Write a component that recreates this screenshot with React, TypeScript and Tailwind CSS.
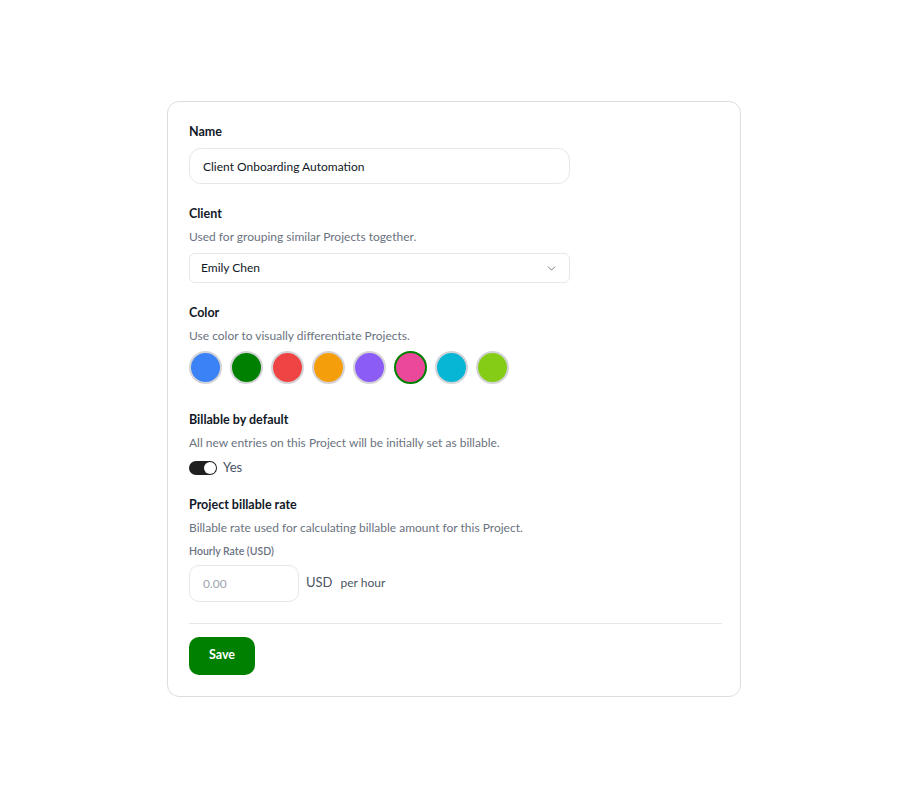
import { useState } from 'react';

const colors = ['#3b82f6', '#008000', '#ef4444', '#f59e0b', '#8b5cf6', '#ec4899', '#06b6d4', '#84cc16'];

export default function App() {
  const [selected, setSelected] = useState('#ec4899');
  const [billable, setBillable] = useState(true);

  return (
    <div className="min-h-screen bg-white pt-[101px] font-['Lato',sans-serif] text-[#111827]">
      <div className="ml-[167px] w-[574px] rounded-xl border border-[#dedede] pb-[21px] pl-[21px] pr-[18px] pt-[21px]">
        {/* Name */}
        <div>
          <label className="block text-[12.5px] font-bold leading-[18px]">Name</label>
          <input
            defaultValue="Client Onboarding Automation"
            className="mt-[7px] h-9 w-[381px] rounded-xl border border-[#e5e7eb] px-[13px] text-[12px] outline-none"
          />
        </div>

        {/* Client */}
        <div className="mt-[21px]">
          <label className="block text-[12.5px] font-bold leading-[18px]">Client</label>
          <p className="mt-[6px] text-[12px] leading-4 text-[#6b7280]">Used for grouping similar Projects together.</p>
          <div className="mt-2 flex h-[30px] w-[381px] items-center justify-between rounded-md border border-[#e5e7eb] px-[11px] text-[12px]">
            <span>Emily Chen</span>
            <svg width="13" height="13" viewBox="0 0 24 24" fill="none" stroke="#6b7280" strokeWidth="1.75" strokeLinecap="round" strokeLinejoin="round">
              <path d="m6 9 6 6 6-6" />
            </svg>
          </div>
        </div>

        {/* Color */}
        <div className="mt-[21px]">
          <label className="block text-[12.5px] font-bold leading-[18px]">Color</label>
          <p className="mt-[6px] text-[12px] leading-4 text-[#6b7280]">Use color to visually differentiate Projects.</p>
          <div className="mt-[7px] flex gap-2">
            {colors.map((c) => (
              <button
                key={c}
                onClick={() => setSelected(c)}
                className={
                  selected === c
                    ? 'h-[33px] w-[33px] rounded-full border-2 border-[#008000]'
                    : 'h-[33px] w-[33px] rounded-full border-2 border-[#d4d4d8]'
                }
                style={{ backgroundColor: c }}
              />
            ))}
          </div>
        </div>

        {/* Billable */}
        <div className="mt-[27px]">
          <label className="block text-[12.5px] font-bold leading-[18px]">Billable by default</label>
          <p className="mt-[6px] text-[12px] leading-4 text-[#6b7280]">All new entries on this Project will be initially set as billable.</p>
          <div className="mt-[7px] flex items-center gap-[6px]">
            <button
              onClick={() => setBillable(!billable)}
              className="flex h-[14px] w-7 items-center justify-end rounded-full bg-[#1f1f1f] px-[1px]"
            >
              <span className="h-3 w-3 rounded-full bg-white" />
            </button>
            <span className="text-[13px] text-[#4b5563]">{billable ? 'Yes' : 'No'}</span>
          </div>
        </div>

        {/* Rate */}
        <div className="mt-[18px]">
          <label className="block text-[12.5px] font-bold leading-[18px]">Project billable rate</label>
          <p className="mt-[6px] text-[12px] leading-4 text-[#6b7280]">Billable rate used for calculating billable amount for this Project.</p>
          <p className="mt-[9px] text-[10.5px] font-semibold leading-3 text-[#6b7280]">Hourly Rate (USD)</p>
          <div className="mt-2 flex items-center gap-[7px]">
            <input
              placeholder="0.00"
              className="h-[37px] w-[110px] rounded-[10px] border border-[#e5e7eb] px-[13px] text-[12px] outline-none placeholder:text-[#9ca3af]"
            />
            <span className="text-[13px] text-[#4b5563]">USD</span>
            <span className="ml-[1px] text-[12px] text-[#4b5563]">per hour</span>
          </div>
        </div>

        <div className="mt-[21px] border-t border-[#e5e7eb]" />

        <button className="mt-[13px] h-[38px] w-[66px] rounded-[10px] bg-[#008000] text-[12.5px] font-bold text-white">
          Save
        </button>
      </div>
    </div>
  );
}
